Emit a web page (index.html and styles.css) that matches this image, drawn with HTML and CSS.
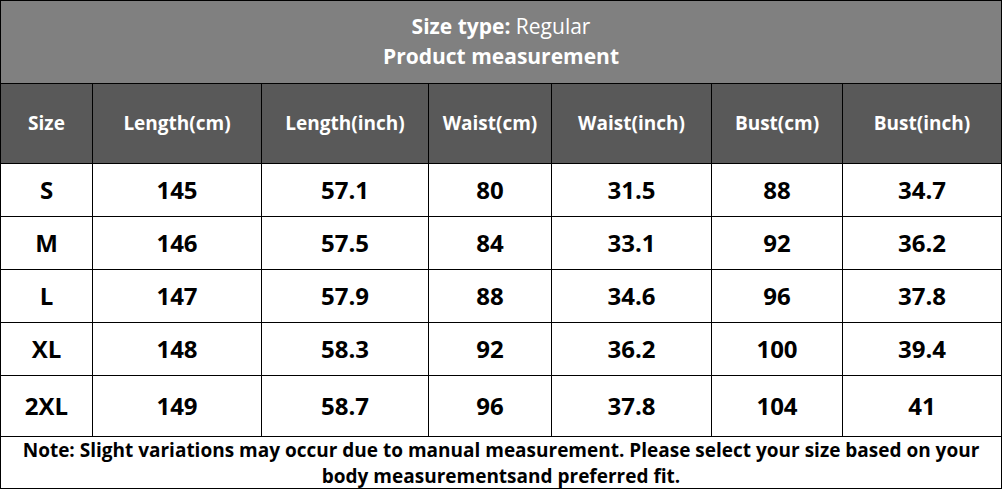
FILE: index.html
```html
<!DOCTYPE html>
<html>
<head>
<meta charset="utf-8">
<link rel="stylesheet" href="styles.css">
</head>
<body>
<div class="chart">
  <div class="title">
    <div><b>Size type:</b> Regular</div>
    <div><b>Product measurement</b></div>
  </div>
  <div class="head">Size</div>
  <div class="head">Length(cm)</div>
  <div class="head">Length(inch)</div>
  <div class="head">Waist(cm)</div>
  <div class="head">Waist(inch)</div>
  <div class="head">Bust(cm)</div>
  <div class="head">Bust(inch)</div>

  <div class="cell">S</div><div class="cell">145</div><div class="cell">57.1</div><div class="cell">80</div><div class="cell">31.5</div><div class="cell">88</div><div class="cell">34.7</div>
  <div class="cell">M</div><div class="cell">146</div><div class="cell">57.5</div><div class="cell">84</div><div class="cell">33.1</div><div class="cell">92</div><div class="cell">36.2</div>
  <div class="cell">L</div><div class="cell">147</div><div class="cell">57.9</div><div class="cell">88</div><div class="cell">34.6</div><div class="cell">96</div><div class="cell">37.8</div>
  <div class="cell">XL</div><div class="cell">148</div><div class="cell">58.3</div><div class="cell">92</div><div class="cell">36.2</div><div class="cell">100</div><div class="cell">39.4</div>
  <div class="cell">2XL</div><div class="cell">149</div><div class="cell">58.7</div><div class="cell">96</div><div class="cell">37.8</div><div class="cell">104</div><div class="cell">41</div>

  <div class="note">Note: Slight variations may occur due to manual measurement. Please select your size based on your body measurementsand preferred fit.</div>
</div>
</body>
</html>
```

FILE: styles.css
```css
html, body {
  margin: 0;
  padding: 0;
  background: #ffffff;
}
.chart {
  width: 1002px;
  display: grid;
  grid-template-columns: 91px 168px 166px 122px 159px 130px 158px;
  grid-template-rows: 82px 79px 52px 52px 52px 52px 60px 51px;
  gap: 1px;
  padding: 1px;
  box-sizing: border-box;
  background: #000000;
  font-family: "Open Sans", "Liberation Sans", sans-serif;
}
.title {
  grid-column: 1 / -1;
  background: #808080;
  color: #ffffff;
  display: flex;
  flex-direction: column;
  align-items: center;
  justify-content: center;
  font-size: 21px;
  line-height: 30px;
  padding-bottom: 3px;
}
.title b { font-weight: 700; }
.head {
  background: #595959;
  color: #ffffff;
  font-weight: 700;
  font-size: 19px;
  display: flex;
  align-items: center;
  justify-content: center;
  padding-bottom: 2px;
}
.cell {
  background: #ffffff;
  color: #000000;
  font-weight: 700;
  font-size: 24px;
  display: flex;
  align-items: center;
  justify-content: center;
  padding-bottom: 2px;
}
.note {
  grid-column: 1 / -1;
  background: #ffffff;
  color: #000000;
  font-weight: 700;
  font-size: 19px;
  line-height: 26px;
  text-align: center;
  padding: 0 12px;
  overflow: hidden;
}
```
